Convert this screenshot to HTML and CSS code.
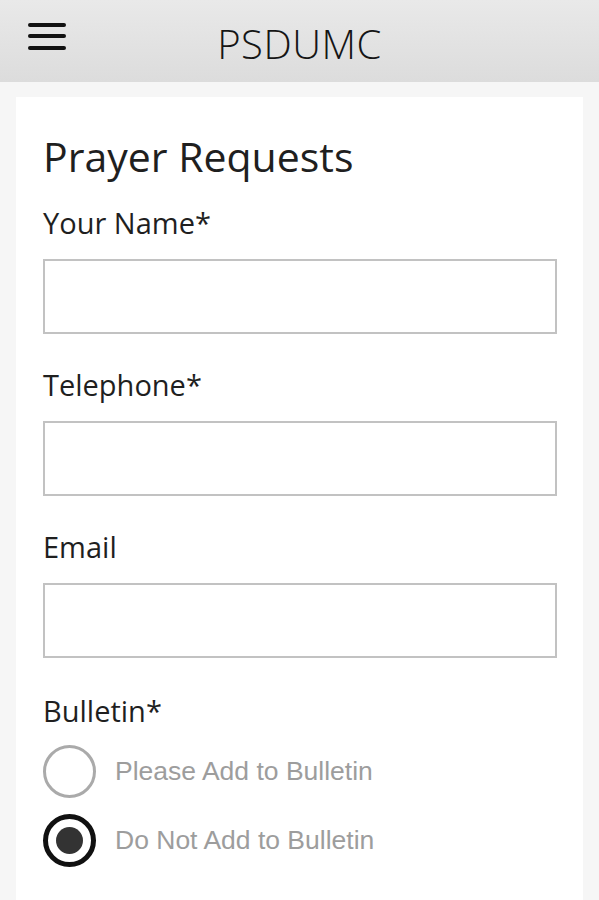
FILE: index.html
```html
<!DOCTYPE html>
<html lang="en">
<head>
  <meta charset="UTF-8" />
  <title>PSDUMC - Prayer Requests</title>
  <link rel="stylesheet" href="styles.css">
</head>
<body>

  <!-- Top bar -->
  <header class="topbar">
    <div class="menu-btn">
      <svg width="38" height="28" viewBox="0 0 38 28">
        <rect x="0" y="0" width="38" height="4" rx="2" fill="#111"/>
        <rect x="0" y="11" width="38" height="4" rx="2" fill="#111"/>
        <rect x="0" y="23" width="38" height="4" rx="2" fill="#111"/>
      </svg>
    </div>
    <div class="title">PSDUMC</div>
    <div></div>
  </header>

  <!-- Form card -->
  <main class="page">
    <form class="card">
      <h1>Prayer Requests</h1>

      <label class="field">
        <span class="label">Your Name*</span>
        <input type="text" />
      </label>

      <label class="field">
        <span class="label">Telephone*</span>
        <input type="tel" />
      </label>

      <label class="field">
        <span class="label">Email</span>
        <input type="email" />
      </label>

      <div class="field">
        <span class="label label-bulletin">Bulletin*</span>
        <div class="radios">
          <label class="radio">
            <span class="dot"></span>
            <span class="radio-text">Please Add to Bulletin</span>
          </label>
          <label class="radio checked">
            <span class="dot"></span>
            <span class="radio-text">Do Not Add to Bulletin</span>
          </label>
        </div>
      </div>
    </form>
  </main>

</body>
</html>
```

FILE: styles.css
```css
body {
  margin: 0;
  font-family: "Open Sans", "Noto Sans", sans-serif;
  background: #f6f6f6;
  color: #1f1f1f;
  height: 900px;
  overflow: hidden;
}

.topbar {
  height: 82px;
  display: grid;
  grid-template-columns: 1fr auto 1fr;
  align-items: center;
  background: linear-gradient(to bottom, #e9e9e9, #dcdcdc);
}

.menu-btn {
  padding-left: 28px;
  height: 82px;
  display: flex;
  align-items: flex-start;
  padding-top: 23px;
  box-sizing: border-box;
}

.title {
  font-size: 40px;
  font-weight: 300;
  letter-spacing: 0.5px;
  color: #151515;
  padding-top: 4px;
}

.page {
  padding: 15px 16px 0;
}

.card {
  background: #fff;
  padding: 32px 26px 0 27px;
  height: 803px;
  box-sizing: border-box;
}

h1 {
  margin: 0 0 20px;
  font-size: 41px;
  font-weight: 400;
  line-height: 54px;
}

.field {
  display: flex;
  flex-direction: column;
  margin-bottom: 31px;
}

.label {
  font-size: 29px;
  line-height: 40px;
  margin-bottom: 16px;
}

.label-bulletin {
  margin-top: 2px;
  margin-bottom: 14px;
}

input {
  height: 75px;
  box-sizing: border-box;
  border: 2px solid #c2c2c2;
  background: #fff;
  margin: 0;
}

.radios {
  display: flex;
  flex-direction: column;
  gap: 16px;
}

.radio {
  display: flex;
  align-items: center;
  gap: 19px;
}

.dot {
  width: 53px;
  height: 53px;
  box-sizing: border-box;
  border-radius: 50%;
  border: 3px solid #aaa;
  display: flex;
  align-items: center;
  justify-content: center;
}

.radio.checked .dot {
  border: 5px solid #111;
}

.radio.checked .dot::after {
  content: "";
  width: 27px;
  height: 27px;
  border-radius: 50%;
  background: #333;
}

.radio-text {
  font-family: "Liberation Sans", Arial, sans-serif;
  font-size: 26.5px;
  color: #9d9d9d;
}
```
